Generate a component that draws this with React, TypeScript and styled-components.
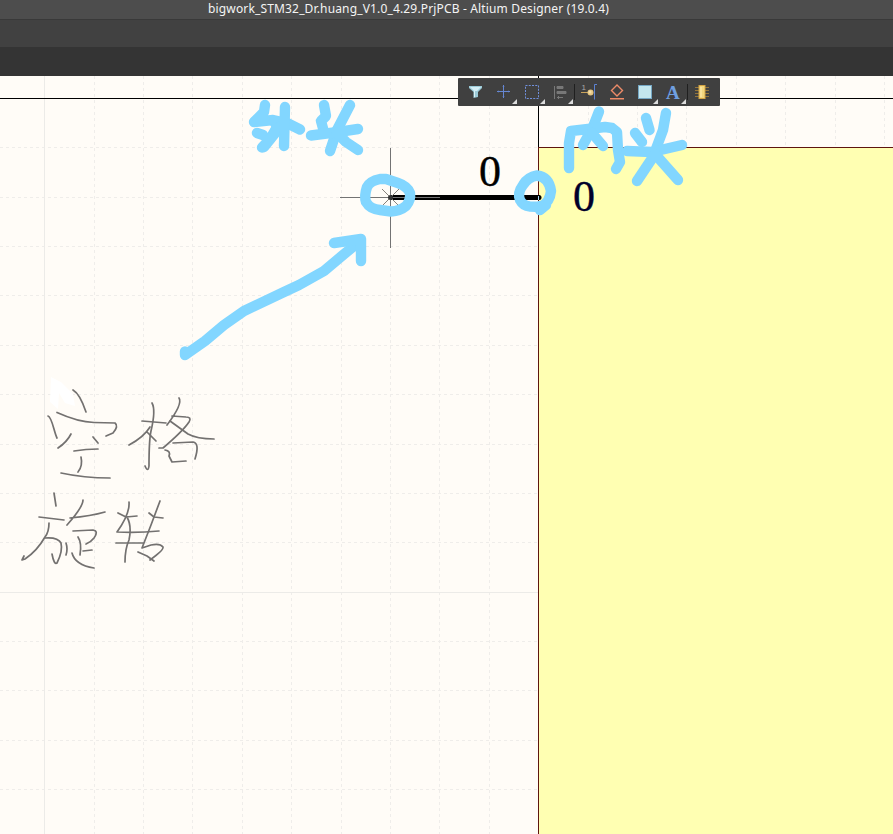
import React from "react";
import styled, { createGlobalStyle } from "styled-components";

const GlobalStyle = createGlobalStyle`
  html, body { margin: 0; padding: 0; overflow: hidden; background: #fffdf8; }
`;

const Window = styled.div`
  display: flex;
  flex-direction: column;
  width: 893px;
  height: 834px;
  overflow: hidden;
`;

const TitleBar = styled.header`
  box-sizing: border-box;
  flex: 0 0 20px;
  display: flex;
  padding-left: 208px;
  background: #4d4d4d;
  border-bottom: 1px solid #393939;
`;

const Title = styled.span`
  font: 12px/18px "Noto Sans", "Open Sans", sans-serif;
  letter-spacing: 0.155px;
  color: #f4f4f4;
  white-space: pre;
`;

const MenuBar = styled.div`
  flex: 0 0 27px;
  background: #414141;
`;

const DocumentBar = styled.div`
  flex: 0 0 29px;
  background: #343434;
`;

const Workspace = styled.main`
  position: relative;
  flex: 1;
`;

const Sheet = styled.svg`
  display: block;
  width: 893px;
  height: 758px;
`;

const PinText = styled.text`
  font: 44px "Liberation Serif", "Times New Roman", serif;
  stroke-width: 0.4px;
`;

const ActiveBar = styled.div`
  position: absolute;
  box-sizing: border-box;
  left: 458px;
  top: 2px;
  width: 262px;
  height: 28px;
  padding-left: 4px;
  display: flex;
  background: #404040;
  border-radius: 1px;
`;

const Tool = styled.button<{ $menu?: boolean; $divided?: boolean }>`
  position: relative;
  box-sizing: border-box;
  flex: 0 0 ${(p) => (p.$divided ? 29 : 28)}px;
  height: 28px;
  padding: 0 0 0 ${(p) => (p.$divided ? 1 : 0)}px;
  border: 0;
  background: ${(p) =>
    p.$divided ? "linear-gradient(#1f1f1f, #1f1f1f) 0 6px / 1px 16px no-repeat" : "none"};
  &::after {
    content: "";
    display: ${(p) => (p.$menu ? "block" : "none")};
    position: absolute;
    right: 1px;
    bottom: 2px;
    border-left: 5px solid transparent;
    border-bottom: 5px solid #dcdcdc;
  }
`;

const Glyph = styled.svg`
  display: block;
  width: 28px;
  height: 28px;
`;

const LetterA = styled.text`
  font: bold 19px "Liberation Serif", serif;
  fill: #6f9fe0;
`;

const PinNumber = styled.text`
  font: 8px "Liberation Sans", sans-serif;
  fill: #a8a8a8;
`;

const tools: { id: string; menu?: boolean; divided?: boolean; icon: React.ReactNode }[] = [
  {
    id: "Filter",
    icon: (
      <g>
        <path d="M7 8H20V10L16 14V19L11.5 20V14L7 10Z" fill="#9ccbd8" />
        <path d="M8 9H19L15 13H12Z" fill="#d4eef5" />
        <path d="M12.5 13V19" stroke="#dcf3f8" />
      </g>
    ),
  },
  {
    id: "Move",
    menu: true,
    icon: (
      <g fill="none" stroke="#6687d3">
        <path d="M13.500 7V20M7 13.500H20" />
        <path d="M12.500 8.500H14.500M12.500 18.500H14.500M8.500 12.500V14.500M18.500 12.500V14.500" opacity="0.5" />
      </g>
    ),
  },
  {
    id: "Select",
    menu: true,
    icon: <path d="M7.5 7.5H20.5V20.5H7.5Z" fill="none" stroke="#7190dd" strokeDasharray="2 1.25" />,
  },
  {
    id: "Align",
    menu: true,
    icon: (
      <g fill="none" stroke="#787878">
        <path d="M8.5 8V21" />
        <path d="M11 8.500H17V10.500H11ZM11 13.500H20V15.500H11Z" fill="#777" />
        <path d="M11 19.500H17M13 18L11.500 19.500L13 21" />
      </g>
    ),
  },
  {
    id: "Pin",
    divided: true,
    icon: (
      <g>
        <PinNumber x="6.5" y="12">1</PinNumber>
        <path d="M6 14.5H13" stroke="#c9a35b" />
        <path d="M22 6.500H19.500V21.500" stroke="#5c82d2" fill="none" />
        <circle cx="15.500" cy="14.500" r="3" fill="#e5c580" />
        <circle cx="15" cy="14" r="1.500" fill="#f4dfaa" />
      </g>
    ),
  },
  {
    id: "Directive",
    icon: (
      <path d="M14 7L19.500 12.500L14 18L8.500 12.500ZM7 20.800H21" fill="none" stroke="#ee8b68" strokeWidth="1.400" />
    ),
  },
  {
    id: "Sheet symbol",
    menu: true,
    icon: <rect x="7.500" y="7.500" width="13" height="13" fill="#c3e6ee" stroke="#75a7c4" />,
  },
  {
    id: "Text",
    menu: true,
    icon: <LetterA x="7" y="20.500">A</LetterA>,
  },
  {
    id: "Part",
    divided: true,
    icon: (
      <g>
        <path d="M7 9.500H21M7 12.500H21M7 15.500H21M7 18.500H21" stroke="#94753b" />
        <rect x="11" y="7.500" width="6" height="13" fill="#f3d77e" stroke="#d4a443" />
        <path d="M13 9V19" stroke="#ffedb5" />
      </g>
    ),
  },
];

const dashedColumns = [94, 143, 192, 242, 291, 341, 390, 439, 489, 588, 637, 686, 736, 785, 835, 884];
const dashedRows = [147, 197, 246, 295, 345, 394, 444, 493, 542, 641, 690, 740, 789];

const markerStrokes = [
  "M265 105L264 112L254 122L273 120L287 123L300 129.500",
  "M257 133L263 135",
  "M274 121L277 127L270 139L262 147.500",
  "M280 127L264 147",
  "M285 107L284 146",
  "M324 105L326 116L321 121L324 132",
  "M350 105L337 130L330 151",
  "M311 135.500L338 132L358 129",
  "M337 133L346 142L358 150",
  "M599 111.500L593 127L583 145",
  "M569 168V143L571 131L588 129L605 127L612 128L617 132L618 150L620 162L616 169",
  "M592 133L603 146",
  "M635 133L642 142",
  "M646 118L649.500 130",
  "M666 113L663 130L653 157L637 181",
  "M627 151L652 152L682 145",
  "M655 154L678 180",
  "M185 351.500V355L205 341L224 325L244 311L284 292L299 285L324 271L343 255L360 241",
  "M334 243L361 239V261",
];

const pencilStrokes = [
  "M73 390Q80 394 86 412",
  "M48 416C52 417 54 432 57 438",
  "M57 412.500Q78 422 94 422.500L115 423Q119 426 113 433L106 436",
  "M58 448Q67 442 71 434M93 437L98 443M74 451Q86 449 98 449",
  "M81 457Q83 466 78 472M61 473Q84 478 110 478",
  "M152 403Q156 410 151 431Q149 440 149 466Q148 473 145 466",
  "M142 421L166 423M129 445Q144 437 150 427M147 432L156 441",
  "M179 398Q183 404 167 425M172 416L186 417Q192 417 189 422Q183 431 163 448H159",
  "M170 421L188 434Q197 439 214 439M165 450Q171 451 169 456L172 462L186 461",
  "M173 443L193 442Q200 443 195 459",
  "M54 493L56 506M39 517L64 520M49 523Q49 532 45 537Q37 551 25 559L22 560L24 556",
  "M45 538Q58 537 61 543Q63 551 57 563Q54 565 52 554",
  "M83 500Q83 507 67 525M70 518Q91 516 105 512",
  "M73 531L93 530Q99 531 94 538Q91 542 86 544",
  "M78 537Q82 543 80 555M83 551L92 550M66 543Q68 549 66 555M72 553Q75 565 94 568",
  "M129 502Q130 514 117 532Q138 533 159 531M118 513L126 517L137 516M127 517Q132 526 129 540Q125 549 125 562",
  "M116 543H144M160 501L151 525L142 548L151 545Q160 543 163 547Q164 550 150 560",
  "M149 513L154 517L163 518M138 552L147 556L154 561",
];

function Schematic() {
  return (
    <Sheet viewBox="0 76 893 758">
      <rect y="76" width="893" height="758" fill="#fffcf7" />
      <g stroke="#efedea" strokeDasharray="3 3" shapeRendering="crispEdges">
        {dashedColumns.map((x) => (
          <path key={x} d={`M${x + 0.5} 76V834`} />
        ))}
        {dashedRows.map((y) => (
          <path key={y} d={`M0 ${y + 0.5}H893`} />
        ))}
      </g>
      <path d="M44.500 76V834M0 592.500H538" stroke="#ecebe8" />
      <path d="M0 98.500H893M538.500 76V147" stroke="#000" />
      <rect x="538.500" y="147.500" width="400" height="700" fill="#ffffb2" stroke="#5e150e" />
      <path d="M390 197.500H540" stroke="#000" strokeWidth="5" />
      <path d="M340 197.500H440M390.500 148V248" stroke="#737373" />
      <path d="M382 189L399 206M399 189L382 206" stroke="#85827b" />
      <circle cx="390.500" cy="197.500" r="2.500" fill="#333" />
      <circle cx="539" cy="197.500" r="2.500" />
      <path d="M538.500 196V200" stroke="#a7d8ed" />
      <PinText x="479" y="186" stroke="#000">0</PinText>
      <PinText x="573" y="211" fill="#00002b" stroke="#00002b">0</PinText>
      <g fill="none" stroke="#82d6ff" strokeWidth="10.400" strokeLinecap="round" strokeLinejoin="round">
        {markerStrokes.map((d) => (
          <path key={d} d={d} />
        ))}
        <path d="M380 179Q370 181 367 187Q364 196 366 202Q370 209 380 210L391 211.500Q400 211 406 206Q411 200 410 193Q407 186 398 183L386 179Z" />
        <path d="M537 175.500Q528 177 523 185Q517 193 520 200Q523 206 530 206.500L541 207Q550 202 551 191Q549 177 537 175.500M540 206V210L546 205" />
      </g>
      <path d="M51 377L61 382L73 394L75 406L65 403L59 393L58 409L50 402Z" fill="#fff" />
      <g fill="none" stroke="#737170" strokeWidth="1.700" strokeLinecap="round" strokeLinejoin="round">
        {pencilStrokes.map((d) => (
          <path key={d} d={d} />
        ))}
      </g>
    </Sheet>
  );
}

export default function App() {
  return (
    <Window>
      <GlobalStyle />
      <TitleBar>
        <Title>bigwork_STM32_Dr.huang_V1.0_4.29.PrjPCB - Altium Designer (19.0.4)</Title>
      </TitleBar>
      <MenuBar />
      <DocumentBar />
      <Workspace>
        <Schematic />
        <ActiveBar>
          {tools.map((tool) => (
            <Tool key={tool.id} aria-label={tool.id} $menu={tool.menu} $divided={tool.divided}>
              <Glyph viewBox="0 0 28 28">{tool.icon}</Glyph>
            </Tool>
          ))}
        </ActiveBar>
      </Workspace>
    </Window>
  );
}
